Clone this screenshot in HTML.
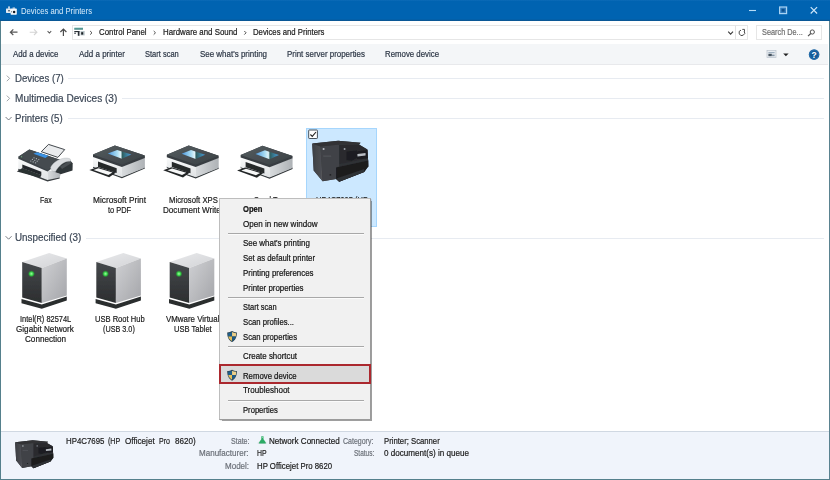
<!DOCTYPE html>
<html>
<head>
<meta charset="utf-8">
<title>Devices and Printers</title>
<style>
html,body{margin:0;padding:0;}
body{width:830px;height:480px;overflow:hidden;background:#fff;font-family:"Liberation Sans",sans-serif;position:relative;color:#1a1a1a;}
.abs{position:absolute;}
.t{position:absolute;white-space:nowrap;line-height:12px;height:12px;font-size:9px;transform-origin:0 50%;-webkit-text-stroke:0.2px currentColor;}
svg{position:absolute;left:0;top:0;overflow:visible;}
#titlebar{left:0;top:0;width:830px;height:20.6px;background:linear-gradient(#0f6cb9 0,#0063b1 1.2px,#0063b1 19px,#0a5794 20.6px);}
#toolbar{left:1px;top:44.3px;width:826.5px;height:20.3px;background:#f4f6f8;border-bottom:0.8px solid #e8e9ec;box-sizing:border-box;}
#status{left:0;top:431px;width:830px;height:49px;background:#f0f4fb;border-top:1px solid #d0d8e2;box-sizing:border-box;}
.gl{position:absolute;height:1px;background:#e7ebf1;}
#menu{left:219px;top:198px;width:151.6px;height:222.4px;background:#f1f1f1;border:1px solid #bdbdbd;border-right-color:#9b9b9b;border-bottom-color:#9b9b9b;box-sizing:border-box;box-shadow:1.4px 1.4px 0.8px rgba(0,0,0,0.38);}
.ms{position:absolute;left:7.5px;width:136.5px;height:1px;background:#a8a8a8;box-shadow:0 1px 0 #fbfbfb;}
</style>
</head>
<body>
<div id="titlebar" class="abs"></div>
<div id="toolbar" class="abs"></div>
<div id="status" class="abs"></div>

<!-- address + search boxes -->
<div class="abs" style="left:72px;top:25px;width:675.5px;height:14.5px;border:1px solid #e6e6e6;box-sizing:border-box;"></div>
<div class="abs" style="left:755.5px;top:25px;width:66px;height:14.5px;border:1px solid #e6e6e6;box-sizing:border-box;"></div>

<!-- group lines -->
<div class="gl" style="left:68px;top:78px;width:756px;"></div>
<div class="gl" style="left:121.5px;top:98px;width:702.5px;"></div>
<div class="gl" style="left:67.5px;top:118px;width:756.5px;"></div>
<div class="gl" style="left:86px;top:238px;width:738px;"></div>

<!-- selected tile -->
<div class="abs" style="left:306.3px;top:128.2px;width:70.5px;height:98.8px;background:#cce8ff;border:1px solid #a6d6fd;box-sizing:border-box;"></div>

<div class="t" style="left:20.5px;top:4.9px;font-size:9.5px;color:#d8ecfb;transform:scaleX(0.8100);-webkit-text-stroke:0;">Devices and Printers</div>
<div class="t" style="left:98.9px;top:25.7px;font-size:9px;color:#1b1b1b;transform:scaleX(0.8726);">Control Panel</div>
<div class="t" style="left:162.6px;top:25.7px;font-size:9px;color:#1b1b1b;transform:scaleX(0.8747);">Hardware and Sound</div>
<div class="t" style="left:252.6px;top:25.7px;font-size:9px;color:#1b1b1b;transform:scaleX(0.8598);">Devices and Printers</div>
<div class="t" style="left:761.6px;top:25.7px;font-size:9px;color:#6d6d6d;transform:scaleX(0.8135);">Search De...</div>
<div class="t" style="left:13.0px;top:47.8px;font-size:9px;color:#2b3544;transform:scaleX(0.8723);">Add a device</div>
<div class="t" style="left:79.0px;top:47.8px;font-size:9px;color:#2b3544;transform:scaleX(0.8888);">Add a printer</div>
<div class="t" style="left:145.4px;top:47.8px;font-size:9px;color:#2b3544;transform:scaleX(0.8339);">Start scan</div>
<div class="t" style="left:200.0px;top:47.8px;font-size:9px;color:#2b3544;transform:scaleX(0.8843);">See what&#x27;s printing</div>
<div class="t" style="left:287.0px;top:47.8px;font-size:9px;color:#2b3544;transform:scaleX(0.8809);">Print server properties</div>
<div class="t" style="left:385.0px;top:47.8px;font-size:9px;color:#2b3544;transform:scaleX(0.8705);">Remove device</div>
<div class="t" style="left:15.0px;top:73.1px;font-size:10px;color:#3d4857;transform:scaleX(0.9648);">Devices (7)</div>
<div class="t" style="left:15.0px;top:93.2px;font-size:10px;color:#3d4857;transform:scaleX(1.0059);">Multimedia Devices (3)</div>
<div class="t" style="left:15.0px;top:113.2px;font-size:10px;color:#3d4857;transform:scaleX(0.9625);">Printers (5)</div>
<div class="t" style="left:15.0px;top:232.4px;font-size:10px;color:#3d4857;transform:scaleX(0.9856);">Unspecified (3)</div>
<div class="t" style="left:39.9px;top:194.0px;font-size:9px;color:#1b1b1b;transform:scaleX(0.7792);">Fax</div>
<div class="t" style="left:93.0px;top:193.7px;font-size:9px;color:#1b1b1b;transform:scaleX(0.9215);">Microsoft Print</div>
<div class="t" style="left:107.5px;top:204.0px;font-size:9px;color:#1b1b1b;transform:scaleX(0.8245);">to PDF</div>
<div class="t" style="left:168.5px;top:194.0px;font-size:9px;color:#1b1b1b;transform:scaleX(0.8559);">Microsoft XPS</div>
<div class="t" style="left:163.0px;top:204.0px;font-size:9px;color:#1b1b1b;transform:scaleX(0.8982);">Document Writer</div>
<div class="t" style="left:253.9px;top:194.0px;font-size:9px;color:#1b1b1b;transform:scaleX(0.8091);">Send To</div>
<div class="t" style="left:242.0px;top:204.0px;font-size:9px;color:#1b1b1b;transform:scaleX(0.8540);">OneNote 2016</div>
<div class="t" style="left:315.6px;top:194.0px;font-size:9px;color:#1b1b1b;transform:scaleX(0.8383);">HP4C7695 (HP</div>
<div class="t" style="left:318.0px;top:204.0px;font-size:9px;color:#1b1b1b;transform:scaleX(0.9319);">Officejet Pro</div>
<div class="t" style="left:331.0px;top:214.5px;font-size:9px;color:#1b1b1b;transform:scaleX(0.8684);">8620)</div>
<div class="t" style="left:19.8px;top:313.2px;font-size:9px;color:#1b1b1b;transform:scaleX(0.8252);">Intel(R) 82574L</div>
<div class="t" style="left:15.8px;top:322.9px;font-size:9px;color:#1b1b1b;transform:scaleX(0.9027);">Gigabit Network</div>
<div class="t" style="left:24.6px;top:332.7px;font-size:9px;color:#1b1b1b;transform:scaleX(0.9024);">Connection</div>
<div class="t" style="left:94.8px;top:313.1px;font-size:9px;color:#1b1b1b;transform:scaleX(0.8402);">USB Root Hub</div>
<div class="t" style="left:103.3px;top:322.9px;font-size:9px;color:#1b1b1b;transform:scaleX(0.8047);">(USB 3.0)</div>
<div class="t" style="left:166.4px;top:313.1px;font-size:9px;color:#1b1b1b;transform:scaleX(0.8774);">VMware Virtual</div>
<div class="t" style="left:174.3px;top:322.9px;font-size:9px;color:#1b1b1b;transform:scaleX(0.8404);">USB Tablet</div>
<div class="t" style="left:65.7px;top:435.4px;font-size:9.5px;color:#1b1b1b;transform:scaleX(0.8282);">HP4C7695</div>
<div class="t" style="left:108.0px;top:435.4px;font-size:9.5px;color:#1b1b1b;transform:scaleX(0.7450);">(HP</div>
<div class="t" style="left:124.7px;top:435.4px;font-size:9.5px;color:#1b1b1b;transform:scaleX(0.8562);">Officejet</div>
<div class="t" style="left:159.0px;top:435.4px;font-size:9.5px;color:#1b1b1b;transform:scaleX(0.7434);">Pro</div>
<div class="t" style="left:175.3px;top:435.4px;font-size:9.5px;color:#1b1b1b;transform:scaleX(0.8514);">8620)</div>
<div class="t" style="left:230.5px;top:435.0px;font-size:9px;color:#6b7078;transform:scaleX(0.7867);">State:</div>
<div class="t" style="left:269.2px;top:435.0px;font-size:9px;color:#1b1b1b;transform:scaleX(0.8957);">Network Connected</div>
<div class="t" style="left:343.4px;top:435.0px;font-size:9px;color:#6b7078;transform:scaleX(0.7789);">Category:</div>
<div class="t" style="left:383.9px;top:435.0px;font-size:9px;color:#1b1b1b;transform:scaleX(0.8565);">Printer; Scanner</div>
<div class="t" style="left:199.4px;top:446.9px;font-size:9px;color:#6b7078;transform:scaleX(0.8932);">Manufacturer:</div>
<div class="t" style="left:257.2px;top:446.9px;font-size:9px;color:#1b1b1b;transform:scaleX(0.7670);">HP</div>
<div class="t" style="left:353.6px;top:446.9px;font-size:9px;color:#6b7078;transform:scaleX(0.7210);">Status:</div>
<div class="t" style="left:383.9px;top:446.9px;font-size:9px;color:#1b1b1b;transform:scaleX(0.8999);">0 document(s) in queue</div>
<div class="t" style="left:224.9px;top:459.8px;font-size:9px;color:#6b7078;transform:scaleX(0.8921);">Model:</div>
<div class="t" style="left:257.2px;top:459.8px;font-size:9px;color:#1b1b1b;transform:scaleX(0.8660);">HP Officejet Pro 8620</div>

<svg width="830" height="480" viewBox="0 0 830 480">
<!-- title icon -->
<g>
  <rect x="6" y="8.6" width="5" height="4.3" rx="0.6" fill="#e4ebf2"/>
  <rect x="10.6" y="8.6" width="6.2" height="6.1" rx="0.7" fill="#f4f7fa"/>
  <rect x="8.2" y="6.4" width="1.6" height="2.4" fill="#dfe8f1"/>
  <rect x="12.6" y="7.5" width="2.4" height="1.3" fill="#cfdbe8"/>
  <circle cx="9" cy="10.8" r="0.8" fill="#1d2b3a"/>
  <circle cx="11.6" cy="11.7" r="0.55" fill="#3a4a5a"/>
  <circle cx="14.1" cy="11.9" r="1.25" fill="#111a24"/>
</g>
<!-- window buttons -->
<line x1="749" y1="10.5" x2="756" y2="10.5" stroke="#b5dbf7" stroke-width="1.1"/>
<rect x="779.6" y="7" width="7" height="6.6" fill="#2f7cc0" stroke="#a9d3f3" stroke-width="1.2"/>
<rect x="781.6" y="8.9" width="3" height="2.8" fill="#0c4f8c"/>
<path d="M810.7,7.1 L817.1,13.5 M817.1,7.1 L810.7,13.5" stroke="#cfe7fa" stroke-width="1.15" fill="none"/>

<!-- nav arrows -->
<path d="M17.5,32.2 H10.6 M13.3,29.4 L10.4,32.2 L13.3,35" stroke="#585858" stroke-width="1.2" fill="none"/>
<path d="M29.7,32.2 H36.8 M34,29.4 L36.9,32.2 L34,35" stroke="#d4d4d4" stroke-width="1.1" fill="none"/>
<path d="M47.6,31.2 L49.4,33 L51.2,31.2" stroke="#5a5a5a" stroke-width="1.05" fill="none"/>
<path d="M63.4,35.9 V29.2 M60.4,32 L63.4,29 L66.4,32" stroke="#4d4d4d" stroke-width="1.2" fill="none"/>
<!-- address icon -->
<g>
  <rect x="74.3" y="27.7" width="8.7" height="1.8" fill="#5fa9a2"/>
  <rect x="74.3" y="28.6" width="8.7" height="0.9" fill="#46807e"/>
  <rect x="74.3" y="31" width="5" height="1.1" fill="#2a3036"/>
  <rect x="77.8" y="31" width="1.7" height="4.8" fill="#2a3036"/>
  <rect x="74.3" y="32.6" width="1.5" height="1.3" fill="#3a4046"/>
  <rect x="80.5" y="31" width="4.2" height="4.4" fill="#bcc6ca"/>
  <rect x="81.2" y="32.2" width="2" height="2.4" fill="#1c2226"/>
</g>
<!-- breadcrumb chevrons -->
<g stroke="#505050" stroke-width="1" fill="none">
  <path d="M90.1,31 L92,32.8 L90.1,34.6"/>
  <path d="M153.7,31 L155.5,32.8 L153.7,34.6"/>
  <path d="M244.3,31 L246.1,32.8 L244.3,34.6"/>
</g>
<!-- dropdown chevron + refresh -->
<path d="M728.2,31.6 L730.6,34.2 L733,31.6" stroke="#3a3a3a" stroke-width="1.1" fill="none"/>
<line x1="735.5" y1="25.5" x2="735.5" y2="39" stroke="#e2e2e2" stroke-width="1"/>
<path d="M744.2,31.2 A2.8,2.8 0 1 1 741,30.1" stroke="#4a4a4a" stroke-width="1" fill="none"/>
<path d="M742.3,29.4 L744.5,29.4 L744.5,31.6" stroke="#4a4a4a" stroke-width="0.95" fill="none"/>
<!-- search magnifier -->
<circle cx="812.3" cy="32" r="2.1" stroke="#4a4a4a" stroke-width="0.95" fill="none"/>
<line x1="810.8" y1="33.5" x2="808" y2="36.2" stroke="#4a4a4a" stroke-width="1.1"/>
<!-- view icon -->
<rect x="767" y="50.6" width="9" height="7" fill="#e9edf1" stroke="#b9c2cc" stroke-width="0.7"/>
<rect x="768.4" y="52" width="6.2" height="1.2" fill="#9fb0c0"/>
<rect x="768.4" y="53.8" width="3.4" height="2.4" fill="#44525e"/>
<rect x="772" y="54.6" width="2.6" height="1.6" fill="#8797a6"/>
<polygon points="783.2,53.4 788.6,53.4 785.9,56.2" fill="#222"/>
<!-- help -->
<circle cx="814.1" cy="54.6" r="5.3" fill="#155b98"/>
<circle cx="814.1" cy="54.6" r="4.5" fill="none" stroke="#3d86c6" stroke-width="0.5"/>
<text x="814.1" y="57.6" font-family="Liberation Sans, sans-serif" font-size="8.4" font-weight="700" fill="#fff" text-anchor="middle">?</text>

<!-- group chevrons -->
<g stroke="#8a8f96" stroke-width="0.8" fill="none">
  <path d="M6.8,75.6 L9.6,78.4 L6.8,81.2"/>
  <path d="M6.8,95.6 L9.6,98.4 L6.8,101.2"/>
</g>
<g stroke="#555b63" stroke-width="0.8" fill="none">
  <path d="M5.6,117 L8.6,120 L11.6,117"/>
  <path d="M5.6,236.2 L8.6,239.2 L11.6,236.2"/>
</g>

<!-- network icon in status bar -->
<g>
  <rect x="257.8" y="442.2" width="8.6" height="1.8" fill="#d3dde0"/>
  <path d="M261.3,436.2 h2.2 v3 l2.2,3 v1.4 h-6.6 v-1.4 l2.2,-3 z" fill="#2dab66"/>
  <rect x="261.6" y="436.6" width="1.5" height="1.4" fill="#7fd6a4"/>
</g>
</svg>

<svg width="830" height="480" viewBox="0 0 830 480">
<defs>
  <linearGradient id="gTop" x1="0" y1="0" x2="1" y2="1"><stop offset="0" stop-color="#555c60"/><stop offset="1" stop-color="#3a4044"/></linearGradient>
  <linearGradient id="gRight" x1="0" y1="0" x2="1" y2="0"><stop offset="0" stop-color="#d9dcde"/><stop offset="1" stop-color="#aeb2b6"/></linearGradient>
  <linearGradient id="gLeft" x1="0" y1="0" x2="0" y2="1"><stop offset="0" stop-color="#fafbfb"/><stop offset="1" stop-color="#dfe2e4"/></linearGradient>
  <linearGradient id="gScreen" x1="0" y1="0" x2="1" y2="0"><stop offset="0" stop-color="#4a97de"/><stop offset="0.4" stop-color="#a9dcf2"/><stop offset="0.55" stop-color="#dff3f9"/><stop offset="0.62" stop-color="#2f5e60"/><stop offset="0.8" stop-color="#3a7f9c"/><stop offset="1" stop-color="#4a9ad8"/></linearGradient>
  <linearGradient id="bTop" x1="0" y1="0" x2="1" y2="1"><stop offset="0" stop-color="#e9eaec"/><stop offset="1" stop-color="#d2d3d6"/></linearGradient>
  <linearGradient id="bFront" x1="0" y1="0" x2="0" y2="1"><stop offset="0" stop-color="#45484b"/><stop offset="1" stop-color="#2c2e30"/></linearGradient>
  <linearGradient id="bRight" x1="0" y1="0" x2="1" y2="1"><stop offset="0" stop-color="#d0d1d4"/><stop offset="1" stop-color="#a4a5a9"/></linearGradient>
  <radialGradient id="led"><stop offset="0" stop-color="#9dffa0"/><stop offset="0.5" stop-color="#35d045"/><stop offset="1" stop-color="#1f7a2a" stop-opacity="0"/></radialGradient>
  <filter id="soft" x="-10%" y="-10%" width="120%" height="120%"><feGaussianBlur stdDeviation="0.35"/></filter>

  <g id="printer">
    <!-- bottom dark band -->
    <polygon points="93,166.2 121.9,176.6 144.9,167.2 144.9,168.6 121.9,178.3 93,167.8" fill="#33383b"/>
    <!-- left face -->
    <polygon points="93,156.4 121.9,166.4 121.9,177.1 93,166.8" fill="url(#gLeft)"/>
    <!-- right face -->
    <polygon points="121.9,166.4 144.9,157.4 144.9,167.7 121.9,177.1" fill="url(#gRight)"/>
    <!-- lid -->
    <polygon points="93,154.6 114.9,145.4 144.9,155.5 144.9,157.9 121.9,166.9 93,157" fill="#383e42"/>
    <polygon points="93,154.6 114.9,145.4 144.9,155.5 121.9,164.4" fill="url(#gTop)"/>
    <!-- screen -->
    <polygon points="107.8,153.6 117.2,149.9 131.3,154.6 121.9,158.8" fill="url(#gScreen)"/>
    <!-- slot -->
    <polygon points="98,161.6 116.7,168.2 116.7,173 98,166.9" fill="#26292b"/>
    <!-- tray -->
    <polygon points="89.4,170.1 97.5,167 116,172.4 109.2,177.3" fill="#232628"/>
    <polygon points="93.6,170.1 98.4,168.3 112.4,172.6 108.3,174.9" fill="#f7f8f8"/>
  </g>

  <g id="devbox">
    <polygon points="21.5,299.1 41.8,304.5 66.8,296.4 66.8,300.5 41.8,308.8 21.5,303.2" fill="#2b2d2f"/>
    <polygon points="22.2,261.9 49.2,253.1 66.8,258.5 41.8,268" fill="url(#bTop)"/>
    <polygon points="22.2,261.9 41.8,268 41.8,303 22.2,297.4" fill="url(#bFront)"/>
    <polygon points="41.8,268 66.8,258.5 66.8,295.4 41.8,303" fill="url(#bRight)"/>
    <circle cx="31.4" cy="273.8" r="3.7" fill="url(#led)"/>
  </g>

  <g id="hp">
    <polygon points="312.2,143.5 338.2,140.7 360.6,142.8 359.0,144.5 367.4,149.5 368.4,166.2 364.2,171.9 339.2,181.8 336.1,178.9 322.6,181.3 313.7,170.4" fill="#393b3e"/>
    <polygon points="312.2,143.8 320.5,146.4 322.6,181.3 313.7,170.4" fill="url(#hpSide)"/>
    <polygon points="320.5,146.4 339.2,144.5 339.2,166.4 336.1,167.5 336.1,178.9 322.6,181.3" fill="#404246"/>
    <polygon points="312.2,143.5 338.2,140.7 360.6,142.8 359.0,144.5 339.2,144.5 320.5,146.4" fill="#303235"/>
    <polygon points="339.2,144.9 359.0,144.5 367.4,149.5 367.9,158.4 341.3,164.3 339.2,164.3" fill="#2a2b2f"/>
    <polygon points="346.5,151.6 357.0,150.6 357.0,158.1 351.8,160.8 346.5,160.2" fill="#1d1e21"/>
    <polygon points="356.4,151.6 367.4,150.1 367.9,158.4 357.0,159.1" fill="#1c1d20"/>
    <polygon points="357.4,153.9 365.5,152.9 365.6,155.6 357.5,156.6" fill="#b9bdc4"/>
    <polygon points="339.2,164.1 367.9,158.4 368.4,160.6 339.2,166.8" fill="#2f3034"/>
    <polygon points="336.1,167.5 368.4,160.6 368.4,166.2 364.2,171.9 339.2,181.8 336.1,178.9" fill="#1a1b1d"/>
    <polygon points="337.7,177.9 364.2,169.1 364.2,171.9 339.2,181.8 336.3,178.9" fill="#2f3034"/>
    <circle cx="323.6" cy="149" r="1.05" fill="#b8bcc4"/>
    <circle cx="344.6" cy="149" r="0.95" fill="#9ea3ab"/>
    <rect x="323.2" y="155.8" width="8" height="0.5" fill="#6a6d72"/>
    <rect x="329.6" y="174.4" width="1.6" height="1" fill="#111"/>
  </g>
  <linearGradient id="hpSide" x1="0" y1="0" x2="1" y2="0"><stop offset="0" stop-color="#3c3e42"/><stop offset="0.8" stop-color="#4b4d52"/><stop offset="1" stop-color="#5a5c61"/></linearGradient>
</defs>

<!-- FAX -->
<g filter="url(#soft)">
  <!-- cradle dark -->
  <polygon points="57,166.5 66,160 70,160.3 72.7,163.2 72.5,170.6 60.6,174.2 52,172" fill="#2f3437"/>
  <polygon points="60,166.6 69.6,160.8 71.6,163 62,169" fill="#4a4f53"/>
  <!-- left face -->
  <polygon points="18.3,157.4 47.5,170.2 47.5,180.6 18.3,169.6" fill="url(#gLeft)"/>
  <!-- right face -->
  <polygon points="47.5,170.2 52,171 60.6,174 59.6,178.2 47.5,181" fill="url(#gRight)"/>
  <!-- bottom band -->
  <polygon points="18.3,168.8 47.5,180 59.6,177.4 59.6,178.6 47.5,181.6 18.3,170.4" fill="#3a3f42"/>
  <!-- top dark -->
  <polygon points="18.3,156.8 29.3,149.4 60,159.8 54,166.8 47.5,171.6 18.3,158.8" fill="#3c4347"/>
  <polygon points="18.3,156.8 29.3,149.4 60,159.8 47.5,170" fill="#454c50"/>
  <!-- slot -->
  <polygon points="22.3,164.6 41.3,171.8 41.3,175.2 22.3,168.2" fill="#24282a"/>
  <!-- tray -->
  <polygon points="16.8,171.4 22.4,168 41.3,175 40.2,177.8" fill="#2b3033"/>
  <!-- paper -->
  <polygon points="41.3,151.7 48.5,144.4 64.7,149.6 57.9,157.4" fill="#e9ebed" stroke="#30353a" stroke-width="0.9"/>
  <!-- display -->
  <polygon points="33.4,153.8 37.1,152.2 48.5,155.8 45.4,157.9" fill="#3a92e4"/>
  <!-- keypad -->
  <g fill="#b4bac0">
    <circle cx="34" cy="157.8" r="0.6"/><circle cx="36.4" cy="158.7" r="0.6"/><circle cx="38.8" cy="159.6" r="0.6"/>
    <circle cx="32.4" cy="159.4" r="0.6"/><circle cx="34.8" cy="160.3" r="0.6"/><circle cx="37.2" cy="161.2" r="0.6"/>
    <circle cx="30.8" cy="161" r="0.6"/><circle cx="33.2" cy="161.9" r="0.6"/><circle cx="35.6" cy="162.8" r="0.6"/>
  </g>
  <circle cx="21.6" cy="156.8" r="0.55" fill="#7ed88a"/>
  <!-- handset -->
  <path d="M50.6,167.4 C52.5,163.5 57.5,159.3 64,158.2 C66.5,157.9 69,158.2 70.3,159 L70.6,161.2 C65,160.5 58.5,165.5 55.4,171.8 C53,172.2 50.6,170.6 50.6,167.4 Z" fill="#dadde0" stroke="#a9adb2" stroke-width="0.35"/>
</g>

<!-- printers -->
<g filter="url(#soft)">
<use href="#printer"/>
<use href="#printer" x="73.8" y="0.2"/>
<use href="#printer" x="147.65" y="0.4"/>
</g>

<!-- HP printer -->
<g filter="url(#soft)"><use href="#hp"/></g>
<!-- checkbox -->
<rect x="308.7" y="130" width="8.7" height="8.5" rx="0.6" fill="#fff" stroke="#3d4852" stroke-width="0.95"/>
<path d="M310.4,134.5 L312.3,136.4 L316,132" fill="none" stroke="#222" stroke-width="1.1"/>

<!-- device boxes -->
<g filter="url(#soft)">
<use href="#devbox"/>
<use href="#devbox" x="74.1"/>
<use href="#devbox" x="147.5"/>
</g>

<!-- status bar printer -->
<g filter="url(#soft)" transform="translate(15,440.5) scale(0.68) translate(-312,-141)"><use href="#hp"/></g>
</svg>


<!-- context menu -->
<div id="menu" class="abs">
  <div class="ms" style="top:34px;"></div>
  <div class="ms" style="top:97.7px;"></div>
  <div class="ms" style="top:147px;"></div>
  <div class="abs" style="left:-0.8px;top:165.3px;width:152.2px;height:20px;background:#dadada;border:2.4px solid #ab282e;box-sizing:border-box;"></div>
  <div class="ms" style="top:201.3px;"></div>
</div>
<div class="t" style="left:243.2px;top:202.9px;font-size:9px;color:#111;transform:scaleX(0.8473);font-weight:700;">Open</div>
<div class="t" style="left:243.2px;top:217.5px;font-size:9px;color:#111;transform:scaleX(0.8969);">Open in new window</div>
<div class="t" style="left:243.2px;top:237.0px;font-size:9px;color:#111;transform:scaleX(0.8817);">See what&#x27;s printing</div>
<div class="t" style="left:243.2px;top:251.7px;font-size:9px;color:#111;transform:scaleX(0.8668);">Set as default printer</div>
<div class="t" style="left:243.2px;top:266.8px;font-size:9px;color:#111;transform:scaleX(0.8753);">Printing preferences</div>
<div class="t" style="left:243.2px;top:281.8px;font-size:9px;color:#111;transform:scaleX(0.8764);">Printer properties</div>
<div class="t" style="left:243.2px;top:301.0px;font-size:9px;color:#111;transform:scaleX(0.8290);">Start scan</div>
<div class="t" style="left:243.0px;top:315.5px;font-size:9px;color:#111;transform:scaleX(0.8567);">Scan profiles...</div>
<div class="t" style="left:243.0px;top:330.5px;font-size:9px;color:#111;transform:scaleX(0.8565);">Scan properties</div>
<div class="t" style="left:243.0px;top:349.5px;font-size:9px;color:#111;transform:scaleX(0.8776);">Create shortcut</div>
<div class="t" style="left:243.2px;top:369.5px;font-size:9px;color:#111;transform:scaleX(0.8641);">Remove device</div>
<div class="t" style="left:243.2px;top:384.4px;font-size:9px;color:#111;transform:scaleX(0.8927);">Troubleshoot</div>
<div class="t" style="left:243.2px;top:403.8px;font-size:9px;color:#111;transform:scaleX(0.8481);">Properties</div>
<svg width="830" height="480" viewBox="0 0 830 480">
<defs>
<g id="shield">
  <path d="M0,1.3 C1.8,1.3 3.2,0.8 4.5,0 C5.8,0.8 7.2,1.3 9,1.3 C9,6 7.4,8.6 4.5,10.2 C1.6,8.6 0,6 0,1.3 Z" fill="#2d4654"/>
  <path d="M0.8,2 C2.3,1.9 3.5,1.5 4.5,0.9 L4.5,5 L1,5 C0.8,4 0.8,3 0.8,2 Z" fill="#1f5f8c"/>
  <path d="M4.5,0.9 C5.5,1.5 6.7,1.9 8.2,2 C8.2,3 8.2,4 8,5 L4.5,5 Z" fill="#ecd089"/>
  <path d="M1,5 L4.5,5 L4.5,9.3 C2.7,8.3 1.5,6.9 1,5 Z" fill="#e6bf5a"/>
  <path d="M4.5,5 L8,5 C7.5,6.9 6.3,8.3 4.5,9.3 Z" fill="#1d5a86"/>
</g>
</defs>
<use href="#shield" transform="translate(227.2,331) scale(1.08)"/>
<use href="#shield" transform="translate(227.2,369.7) scale(1.08)"/>
</svg>


<!-- window border -->
<div class="abs" style="left:0;top:20.5px;width:1px;height:460px;background:#55808c;"></div>
<div class="abs" style="left:829px;top:20.5px;width:1px;height:460px;background:#5a8290;"></div>
<div class="abs" style="left:0;top:479px;width:830px;height:1px;background:#55808c;"></div>
</body>
</html>
